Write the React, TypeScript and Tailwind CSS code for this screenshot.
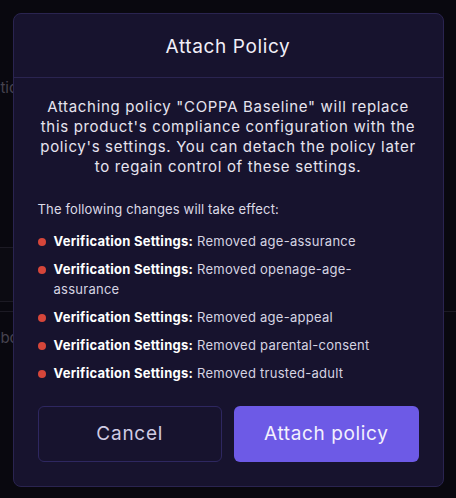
export default function App() {
  const changes = [
    "Removed age-assurance",
    "Removed openage-age-assurance",
    "Removed age-appeal",
    "Removed parental-consent",
    "Removed trusted-adult",
  ];

  return (
    <div className="relative h-[498px] w-full overflow-hidden bg-[#09080f] font-['Inter',sans-serif]">
      {/* dimmed page behind the dialog */}
      <div className="flex flex-col">
        <div className="h-[78px]" />
        <div className="-ml-[8px] h-[20px] text-[15px] leading-[20px] text-[#46434f]">ation</div>
        <div className="h-[149px]" />
        <div className="h-[55px] w-[320px] border-y border-[#1c1a24] bg-[#0c0b12]" />
        <div className="h-[9px]" />
        <div className="border-t border-[#1c1a24]" />
        <div className="-ml-[8px] mt-[16px] text-[15px] leading-[20px] text-[#46434f]">about</div>
      </div>

      <div className="absolute inset-0 flex justify-center pt-[13px]">
        <div className="flex h-[474px] w-[431px] flex-col rounded-[8px] border border-[#2a2450] bg-[#17132e]">
          <div className="flex h-[64px] items-center justify-center border-b border-[#2a2450] pt-[3px]">
            <h2 className="text-[19px] font-normal tracking-[0.033em] text-[#f1eff8]">Attach Policy</h2>
          </div>

          <div className="flex flex-1 flex-col px-6 pt-[19px]">
            <p className="text-center text-[15px] leading-[20px] tracking-[0.045em] text-[#e6e4ef]">
              Attaching policy "COPPA Baseline" will replace this product's compliance configuration with the policy's
              settings. You can detach the policy later to regain control of these settings.
            </p>

            <p className="mt-[22px] text-[13px] leading-[20px] tracking-[0.012em] text-[#dcdae6]">
              The following changes will take effect:
            </p>

            <ul className="mt-[12px] flex flex-col gap-2 pr-[40px]">
              {changes.map((c) => (
                <li key={c} className="flex items-start gap-2 text-[13px] leading-[20px] tracking-[0.02em] text-[#d6d4e2]">
                  <span className="mt-[7px] h-2 w-2 shrink-0 rounded-full bg-[#d6463a]" />
                  <span>
                    <strong className="font-bold text-white">Verification Settings:</strong> {c}
                  </span>
                </li>
              ))}
            </ul>

            <div className="mt-auto mb-6 grid grid-cols-2 gap-3">
              <button
                type="button"
                className="h-14 rounded-md border border-[#2e2760] bg-[#17132e] text-[19px] tracking-[0.04em] text-[#cfcbe3]"
              >
                Cancel
              </button>
              <button
                type="button"
                className="h-14 rounded-md bg-[#6d5ae6] text-[19px] tracking-[0.033em] text-[#f3f1fd]"
              >
                Attach policy
              </button>
            </div>
          </div>
        </div>
      </div>
    </div>
  );
}
